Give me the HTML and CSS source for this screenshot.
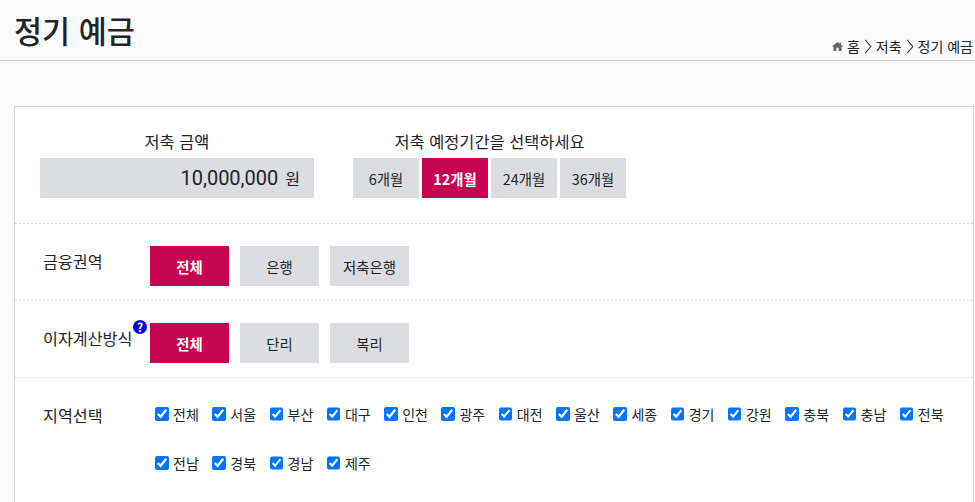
FILE: index.html
```html
<!DOCTYPE html>
<html lang="ko">
<head>
    <meta charset="UTF-8">
    <meta name="viewport" content="width=device-width, initial-scale=1.0">
    <title>정기 예금</title>
    <link rel="stylesheet" href="styles.css">
</head>
<body>
    <header class="page-head">
        <h1>정기 예금</h1>
        <nav class="crumbs">
            <svg class="home-icon" viewBox="0 0 12 10" width="11" height="9"><path d="M6 0 L8.5 2 L8.5 .6 L10 .6 L10 3.3 L12 5 L10.5 5.6 L10.5 10 L7.3 10 L7.3 6.5 L4.7 6.5 L4.7 10 L1.5 10 L1.5 5.6 L0 5 Z" fill="#666"/></svg>
            <span>홈</span>
            <svg class="chev" viewBox="0 0 8 16" width="8" height="15"><path d="M1 1 L7 8 L1 15" fill="none" stroke="#333" stroke-width="1.1"/></svg>
            <span>저축</span>
            <svg class="chev" viewBox="0 0 8 16" width="8" height="15"><path d="M1 1 L7 8 L1 15" fill="none" stroke="#333" stroke-width="1.1"/></svg>
            <span>정기 예금</span>
        </nav>
    </header>

    <main class="card">
        <section class="row row-top">
            <div class="amount">
                <p class="col-title">저축 금액</p>
                <div class="amount-box"><span class="amount-num">10,000,000</span> <span class="amount-unit">원</span></div>
            </div>
            <div class="period">
                <p class="col-title">저축 예정기간을 선택하세요</p>
                <div class="period-btns">
                    <button class="btn btn-sm">6개월</button>
                    <button class="btn btn-sm on">12개월</button>
                    <button class="btn btn-sm">24개월</button>
                    <button class="btn btn-sm">36개월</button>
                </div>
            </div>
        </section>

        <section class="row row-opt">
            <div class="label">금융권역</div>
            <div class="opts">
                <button class="btn on">전체</button>
                <button class="btn">은행</button>
                <button class="btn">저축은행</button>
            </div>
        </section>

        <section class="row row-opt">
            <div class="label">이자계산방식<span class="help">?</span></div>
            <div class="opts">
                <button class="btn on">전체</button>
                <button class="btn">단리</button>
                <button class="btn">복리</button>
            </div>
        </section>

        <section class="row-area">
            <div class="label">지역선택</div>
            <div class="areas">
                <label><input type="checkbox" checked>전체</label>
                <label><input type="checkbox" checked>서울</label>
                <label><input type="checkbox" checked>부산</label>
                <label><input type="checkbox" checked>대구</label>
                <label><input type="checkbox" checked>인천</label>
                <label><input type="checkbox" checked>광주</label>
                <label><input type="checkbox" checked>대전</label>
                <label><input type="checkbox" checked>울산</label>
                <label><input type="checkbox" checked>세종</label>
                <label><input type="checkbox" checked>경기</label>
                <label><input type="checkbox" checked>강원</label>
                <label><input type="checkbox" checked>충북</label>
                <label><input type="checkbox" checked>충남</label>
                <label><input type="checkbox" checked>전북</label>
                <label><input type="checkbox" checked>전남</label>
                <label><input type="checkbox" checked>경북</label>
                <label><input type="checkbox" checked>경남</label>
                <label><input type="checkbox" checked>제주</label>
            </div>
        </section>
    </main>
</body>
</html>
```

FILE: styles.css
```css
html, body { height: 100%; overflow: hidden; }
body { margin: 0; background: #fbfbfc; color: #212529; font-family: "Noto Sans CJK KR", "Noto Sans", sans-serif; font-size: 14px; }
p { margin: 0; }

.page-head { display: flex; justify-content: space-between; align-items: flex-end; height: 60px; padding: 0 2px 0 14px; border-bottom: 1px solid #ccc; }
.page-head h1 { margin: 0 0 3px; font-size: 30.5px; font-weight: 500; line-height: 54px; }
.crumbs { display: flex; align-items: center; gap: 4px; margin-bottom: 5px; font-size: 14px; line-height: 18px; }

.card { margin: 45px 1px 0 14px; background: #fff; border: 1px solid #d4d4d4; }
.row { background: repeating-linear-gradient(90deg, #d6d6d6 0 2px, transparent 2px 4px) left bottom / 100% 1px no-repeat; }

.row-top { display: flex; gap: 39px; height: 117px; padding: 0 0 0 25px; box-sizing: border-box; }
.col-title { margin-top: 22px; height: 29px; font-size: 16.4px; line-height: 24px; text-align: center; }
.amount { width: 274px; }
.amount-box { display: flex; justify-content: flex-end; align-items: center; gap: 7px; height: 40px; padding-right: 14px; background: #dcdde1; }
.amount-num { font-family: "Roboto", sans-serif; font-size: 20px; }
.amount-unit { font-size: 16px; }
.period { width: 273px; }
.period-btns { display: flex; gap: 3px; }

.btn { width: 79px; height: 40px; padding: 0; border: 0; background: #dcdde1; color: #212529; font-family: inherit; font-size: 14.4px; font-weight: 400; }
.btn-sm { width: 66px; }
.btn.on { background: #c70452; color: #fff; font-weight: 700; }

.row-opt { display: flex; height: 77px; box-sizing: border-box; padding: 22px 0 0 28px; }
.label { position: relative; width: 107px; font-size: 16.2px; line-height: 30px; }
.opts { display: flex; gap: 11px; }
.help { position: absolute; top: -3px; left: 90px; width: 14px; height: 14px; border-radius: 50%; background: #0000e0; color: #fff; font-size: 12px; font-weight: 700; line-height: 14px; text-align: center; }

.row-area { display: flex; height: 130px; box-sizing: border-box; padding: 22px 0 0 28px; }
.areas { display: flex; flex-wrap: wrap; align-content: flex-start; gap: 19px 0; width: 803px; margin-top: -1px; }
.areas label { display: flex; align-items: center; width: 57.3px; height: 30px; font-size: 14px; }
.areas input { width: 13.5px; height: 13.5px; margin: 0 4.5px 0 5px; accent-color: #0075ff; }
```
